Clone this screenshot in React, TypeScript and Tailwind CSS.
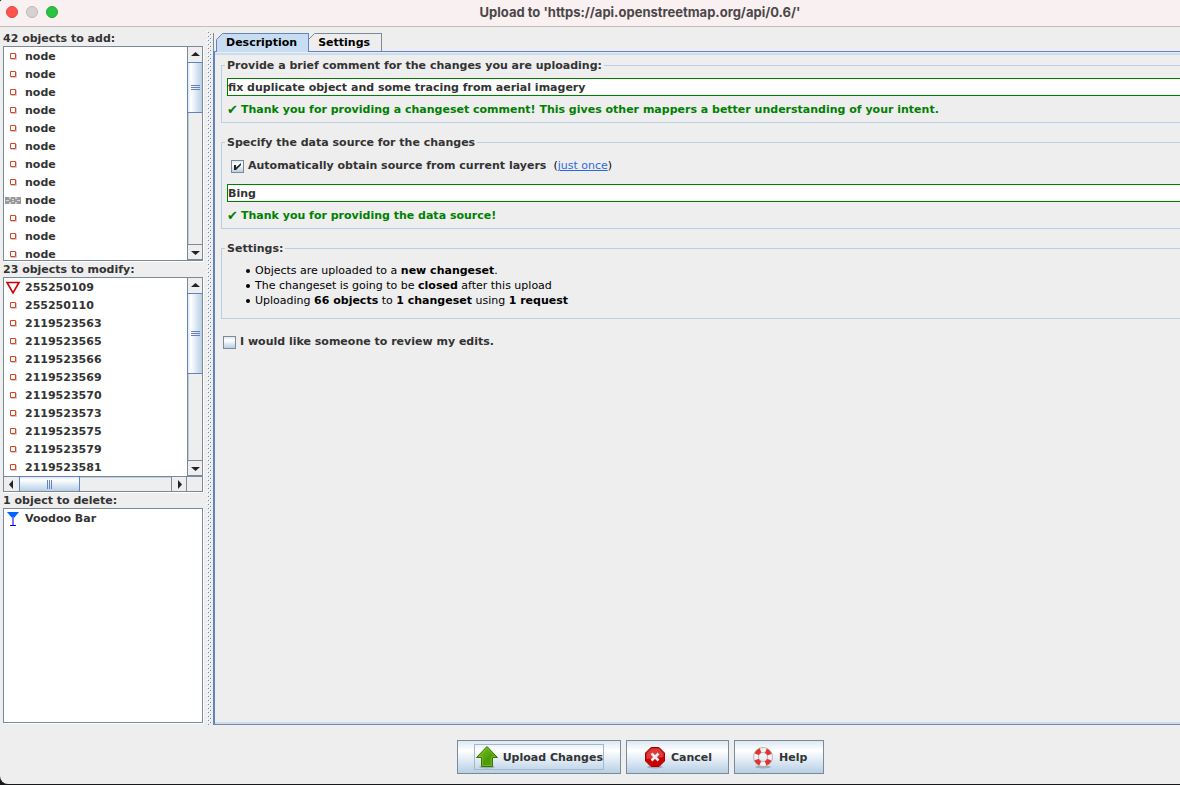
import { useState } from "react";
import type { ReactNode } from "react";

const modified = [
  "255250109",
  "255250110",
  "2119523563",
  "2119523565",
  "2119523566",
  "2119523569",
  "2119523570",
  "2119523573",
  "2119523575",
  "2119523579",
  "2119523581",
];

const added = Array.from({ length: 12 }, (_, i) => ({
  name: "node",
  icon: i === 8 ? "wall" : "node",
}));

function ItemIcon({ type }: { type: string }) {
  if (type === "triangle") {
    return (
      <svg width="16" height="16" viewBox="0 0 16 16" className="shrink-0">
        <path d="M2 2.500H14L8 13Z" fill="#fff" stroke="#cc0000" strokeWidth="1.6" />
      </svg>
    );
  }
  if (type === "wall") {
    return (
      <svg width="16" height="16" viewBox="0 0 16 16" className="shrink-0">
        <path d="M0 4H16V11H0Z" fill="#999" />
        <path d="M5 4v2M5 9v2M11 4v2M11 9v2" stroke="#fff" />
        <path d="M1 7h3v1H1zM7 6h2v1H7zM7 8h2v1H7zM12 7h3v1h-3z" fill="#ddd" />
      </svg>
    );
  }
  if (type === "bar") {
    return (
      <svg width="16" height="16" viewBox="0 0 16 16" className="shrink-0">
        <path d="M2 1H14L9 7H7Z" fill="#0066ff" />
        <path d="M7 6h2v8H7z" fill="#7777ff" />
        <path d="M5 14h6v1H5z" fill="#0000ff" />
      </svg>
    );
  }
  return (
    <svg width="16" height="16" viewBox="0 0 16 16" className="shrink-0">
      <path d="M6 10.500H11.500V5" fill="none" stroke="#ccc" />
      <path d="M5.500 4.500h5v5h-5z" fill="#fff" stroke="#dd4422" />
    </svg>
  );
}

function ArrowButton({ dir }: { dir: "up" | "down" | "left" | "right" }) {
  const paths = {
    up: "M3 9L7.500 5L12 9Z",
    down: "M3 6H12L7.500 10Z",
    left: "M9 3V12L5 7.500Z",
    right: "M6 3L10 7.500L6 12Z",
  };
  const styles = {
    up: "h-4 w-[14px] border-b",
    down: "h-4 w-[14px] border-y",
    left: "h-[14px] w-4 border-r",
    right: "h-[14px] w-4 border-x",
  };
  return (
    <button
      aria-label={`Scroll ${dir}`}
      className={`flex shrink-0 items-center justify-center overflow-hidden border-[#7a8a99] bg-[#eeeeee] ${styles[dir]}`}
    >
      <svg width="15" height="15" viewBox="0 0 15 15" className="shrink-0">
        <path d={paths[dir]} fill="#222" />
      </svg>
    </button>
  );
}

function VerticalScrollbar({ thumb }: { thumb: string }) {
  return (
    <div className="flex w-[15px] shrink-0 flex-col border-l border-[#7a8a99] bg-[#eeeeee]">
      <ArrowButton dir="up" />
      <div className="flex-1 border-l border-[#b8cfe5]">
        <div
          className={`-mt-px -ml-0.5 flex flex-col items-center justify-center gap-px border border-r-0 border-[#6382bf] bg-linear-to-r from-[#dce8f4] via-white via-20% to-[#b8cfe5] ${thumb}`}
        >
          <span className="h-px w-[9px] bg-[#6382bf]" />
          <span className="h-px w-[9px] bg-[#6382bf]" />
          <span className="h-px w-[9px] bg-[#6382bf]" />
        </div>
      </div>
      <ArrowButton dir="down" />
    </div>
  );
}

function HorizontalScrollbar() {
  return (
    <div className="flex h-[15px] shrink-0 border-t border-[#7a8a99] bg-[#eeeeee]">
      <ArrowButton dir="left" />
      <div className="flex-1 border-t border-[#b8cfe5]">
        <div className="-mt-0.5 -ml-px flex h-[15px] w-[61px] items-center justify-center gap-px border border-b-0 border-[#6382bf] bg-linear-to-b from-[#dce8f4] via-white via-20% to-[#b8cfe5]">
          <span className="h-[9px] w-px bg-[#6382bf]" />
          <span className="h-[9px] w-px bg-[#6382bf]" />
          <span className="h-[9px] w-px bg-[#6382bf]" />
        </div>
      </div>
      <ArrowButton dir="right" />
      <div className="w-[15px]" />
    </div>
  );
}

function ObjectList({
  title,
  items,
  thumb,
  horizontal,
}: {
  title: string;
  items: { name: string; icon: string }[];
  thumb?: string;
  horizontal?: boolean;
}) {
  return (
    <section className="flex min-h-0 flex-1 flex-col">
      <h2 className="h-4 leading-[18px]">{title}</h2>
      <div className="flex min-h-0 flex-1 flex-col border border-[#7a8a99] bg-white shadow-[1px_1px_0_white]">
        <div className="flex min-h-0 flex-1">
          <ul className="min-w-0 flex-1 overflow-hidden pt-px">
            {items.map((item, i) => (
              <li key={i} className="flex h-[18px] items-center gap-1 pl-px">
                <ItemIcon type={item.icon} />
                {item.name}
              </li>
            ))}
          </ul>
          {thumb && <VerticalScrollbar thumb={thumb} />}
        </div>
        {horizontal && <HorizontalScrollbar />}
      </div>
    </section>
  );
}

function Divider() {
  return (
    <div className="w-[9px] shrink-0 pt-1 pl-1">
      <svg width="4" height="100%">
        <defs>
          <pattern id="bumps" width="4" height="4" patternUnits="userSpaceOnUse">
            <path d="M0 0h1v1H0zM2 2h1v1H2z" fill="#fff" />
            <path d="M1 1h1v1H1zM3 3h1v1H3z" fill="#6f8db0" />
          </pattern>
        </defs>
        <rect width="4" height="100%" fill="url(#bumps)" />
      </svg>
    </div>
  );
}

function Group({ title, children }: { title: string; children: ReactNode }) {
  return (
    <fieldset className="min-w-0 border-y border-l border-[#b8cfe5] pl-[5px]">
      <legend className="-ml-0.5 h-[15px] px-0.5 leading-[15px]">{title}</legend>
      {children}
    </fieldset>
  );
}

function CheckBox({
  id,
  checked,
  onChange,
}: {
  id: string;
  checked: boolean;
  onChange: (value: boolean) => void;
}) {
  return (
    <span className="grid shrink-0">
      <input
        id={id}
        type="checkbox"
        checked={checked}
        onChange={(e) => onChange(e.target.checked)}
        className="col-start-1 row-start-1 size-[13px] appearance-none border border-[#7a8a99] bg-linear-to-b from-[#dde8f3] via-white via-30% to-[#b8cfe5]"
      />
      {checked && (
        <svg width="13" height="13" viewBox="0 0 13 13" className="pointer-events-none col-start-1 row-start-1">
          <path d="M3 5H5V7.500L10 3V5L5 10H3Z" fill="#222" />
        </svg>
      )}
    </span>
  );
}

function Thanks({ children }: { children: ReactNode }) {
  return (
    <p className="flex h-4 items-center text-[#008000]">
      <span className="w-3.5 shrink-0 text-[13px]">✔</span>
      {children}
    </p>
  );
}

function UploadIcon() {
  return (
    <svg width="24" height="24" viewBox="0 0 24 24">
      <defs>
        <linearGradient id="arrow-fill" x1="0" y1="0" x2="1" y2="1">
          <stop offset="0" stopColor="#7cc832" />
          <stop offset="0.6" stopColor="#4e9a06" />
          <stop offset="1" stopColor="#56a80c" />
        </linearGradient>
      </defs>
      <ellipse cx="12" cy="22" rx="8" ry="1.500" fill="#000" opacity="0.2" />
      <path d="M12 1.500L22.500 12.500H17.500V21.500H6.500V12.500H1.500Z" fill="url(#arrow-fill)" stroke="#3a7304" />
      <path d="M12 3L20 11.500H16.500V20.500H7.500V11.500H4Z" fill="none" stroke="#7cc832" opacity="0.6" />
    </svg>
  );
}

function CancelIcon() {
  return (
    <svg width="24" height="24" viewBox="0 0 24 24">
      <ellipse cx="12" cy="22" rx="8" ry="1.500" fill="#000" opacity="0.2" />
      <path d="M8 2.500H16L21.500 8V16L16 21.500H8L2.500 16V8Z" fill="#cc0000" stroke="#a40000" />
      <path d="M8.500 3.500H15.500L20.500 8.500V12L3.500 14V8.500Z" fill="#e86060" opacity="0.6" />
      <path d="M8.500 8.500L15.500 15.500M15.500 8.500L8.500 15.500" stroke="#eee" strokeWidth="2.600" />
    </svg>
  );
}

function HelpIcon() {
  return (
    <svg width="24" height="24" viewBox="0 0 24 24">
      <ellipse cx="12" cy="22" rx="8" ry="1.500" fill="#000" opacity="0.2" />
      <circle cx="12" cy="12" r="7" fill="none" stroke="#f4f4f4" strokeWidth="5" />
      <circle
        cx="12"
        cy="12"
        r="7"
        fill="none"
        stroke="#e83030"
        strokeWidth="5"
        strokeDasharray="5.500 5.500"
        strokeDashoffset="-2.750"
      />
      <circle cx="12" cy="12" r="9.500" fill="none" stroke="#b0a0a0" strokeWidth="0.8" />
      <circle cx="12" cy="12" r="4.500" fill="none" stroke="#b0a0a0" strokeWidth="0.8" />
    </svg>
  );
}

const buttonClass =
  "flex h-[34px] items-center justify-center border border-[#7a8a99] bg-linear-to-b from-[#dde8f3] via-white via-30% to-[#b8cfe5] px-4 leading-4";

const fieldClass =
  "block h-[18px] w-full border border-r-0 border-[#008000] bg-white outline-none";

const bulletClass = "flex items-center gap-[5px] before:size-1 before:rounded-full before:bg-black";

export default function App() {
  const [tab, setTab] = useState("Description");
  const [comment, setComment] = useState("fix duplicate object and some tracing from aerial imagery");
  const [source, setSource] = useState("Bing");
  const [autoSource, setAutoSource] = useState(true);
  const [review, setReview] = useState(false);

  return (
    <div className="h-screen bg-[#15191a] pb-px">
      <div className="flex h-full flex-col overflow-hidden rounded-tl-[3px] rounded-bl-[8px] bg-[#eeeeee] font-['DejaVu_Sans',sans-serif] text-[11px] font-bold text-[#333333]">
        {/* Title bar */}
        <header className="flex h-[27px] shrink-0 items-center border-b border-[#c0bebe] bg-[#f9f0f1] pb-0.5 pl-1.5">
          <div className="flex w-[94px] gap-2">
            <button aria-label="Close" className="size-3 rounded-full border border-[#e0443e] bg-[#ff5450]" />
            <button aria-label="Minimize" className="size-3 rounded-full border border-[#bfb7b8] bg-[#d9d0d1]" />
            <button aria-label="Zoom" className="size-3 rounded-full border border-[#22a436] bg-[#2ac540]" />
          </div>
          <h1 className="flex-1 pt-px text-center font-['Inter',sans-serif] text-[13px] text-[#4b4748]">
            Upload to 'https://api.openstreetmap.org/api/0.6/'
          </h1>
        </header>

        <div className="flex min-h-0 flex-1">
          <aside className="ml-[3px] flex w-[200px] shrink-0 flex-col pt-[3px] pb-0.5">
            <ObjectList title="42 objects to add:" items={added} thumb="h-[51px]" />
            <ObjectList
              title="23 objects to modify:"
              items={modified.map((name, i) => ({ name, icon: i === 0 ? "triangle" : "node" }))}
              thumb="h-[81px]"
              horizontal
            />
            <ObjectList title="1 object to delete:" items={[{ name: "Voodoo Bar", icon: "bar" }]} />
          </aside>

          <Divider />

          {/* Tabs */}
          <main className="ml-px flex min-w-0 flex-1 flex-col pt-1.5">
            <div role="tablist" className="flex h-[18px] shrink-0 border-l border-[#7a8a99] pl-0.5 text-black">
              {["Description", "Settings"].map((name) => (
                <button
                  key={name}
                  role="tab"
                  aria-selected={tab === name}
                  onClick={() => setTab(name)}
                  className={`relative border border-b-0 pr-[11px] pl-[9px] ${
                    tab === name
                      ? "z-10 h-[19px] border-[#6382bf] bg-[#c8ddf2]"
                      : "h-[18px] border-l-0 border-[#7a8a99] bg-[#eeeeee] pt-px"
                  }`}
                >
                  <svg width="7" height="7" viewBox="0 0 7 7" className="absolute -top-px -left-px">
                    <path d="M0 0H7L0 7Z" fill="#eeeeee" />
                    <path d="M0.500 6.500L6.500 0.500" stroke={tab === name ? "#6382bf" : "#7a8a99"} />
                  </svg>
                  {name}
                </button>
              ))}
            </div>
            <div className="flex min-h-0 flex-1 flex-col border-t border-b border-l-2 border-t-[#6382bf] border-b-[#7a8a99] border-l-[#6382bf]">
              <div className="mt-px flex-1 border-y-2 border-[#c8ddf2] pt-[3px] pl-1.5">
                <Group title="Provide a brief comment for the changes you are uploading:">
                  <input
                    aria-label="Changeset comment"
                    value={comment}
                    onChange={(e) => setComment(e.target.value)}
                    className={`mt-[5px] ${fieldClass}`}
                  />
                  <div className="pt-1.5 pb-1">
                    <Thanks>
                      Thank you for providing a changeset comment! This gives other mappers a better understanding of
                      your intent.
                    </Thanks>
                  </div>
                </Group>

                <div className="h-3" />
                <Group title="Specify the data source for the changes">
                  <div className="mt-[7px] flex h-5 items-center gap-1 pb-px pl-1">
                    <CheckBox id="auto-source" checked={autoSource} onChange={setAutoSource} />
                    <label htmlFor="auto-source">Automatically obtain source from current layers</label>
                    <span className="pl-[3px] font-normal text-black">
                      (
                      <a href="#once" className="text-[#2a6bdb] underline">
                        just once
                      </a>
                      )
                    </span>
                  </div>
                  <input
                    aria-label="Data source"
                    value={source}
                    onChange={(e) => setSource(e.target.value)}
                    className={`mt-[7px] ${fieldClass}`}
                  />
                  <div className="pt-1.5 pb-1">
                    <Thanks>Thank you for providing the data source!</Thanks>
                  </div>
                </Group>

                <div className="h-3" />
                <Group title="Settings:">
                  <ul className="mt-[7px] mb-2.5 pl-[19px] leading-[15px] font-normal text-black">
                    <li className={bulletClass}>
                      <span>
                        Objects are uploaded to a <b>new changeset</b>.
                      </span>
                    </li>
                    <li className={bulletClass}>
                      <span>
                        The changeset is going to be <b>closed</b> after this upload
                      </span>
                    </li>
                    <li className={bulletClass}>
                      <span>
                        Uploading <b>66 objects</b> to <b>1 changeset</b> using <b>1 request</b>
                      </span>
                    </li>
                  </ul>
                </Group>

                <div className="mt-3.5 flex h-5 items-center gap-1 pb-px pl-0.5">
                  <CheckBox id="review" checked={review} onChange={setReview} />
                  <label htmlFor="review">I would like someone to review my edits.</label>
                </div>
              </div>
            </div>
          </main>
        </div>

        <footer className="flex shrink-0 justify-center gap-[5px] pt-[15px] pb-2.5 pl-[101px]">
          <button className={buttonClass}>
            <span className="flex h-[26px] items-center gap-1 border border-[#a3b8cc]">
              <UploadIcon />
              <span className="pt-0.5">Upload Changes</span>
            </span>
          </button>
          <button className={`gap-1 ${buttonClass}`}>
            <CancelIcon />
            <span className="pt-0.5">Cancel</span>
          </button>
          <button className={`gap-1 ${buttonClass}`}>
            <HelpIcon />
            <span className="pt-0.5">Help</span>
          </button>
        </footer>
      </div>
    </div>
  );
}
